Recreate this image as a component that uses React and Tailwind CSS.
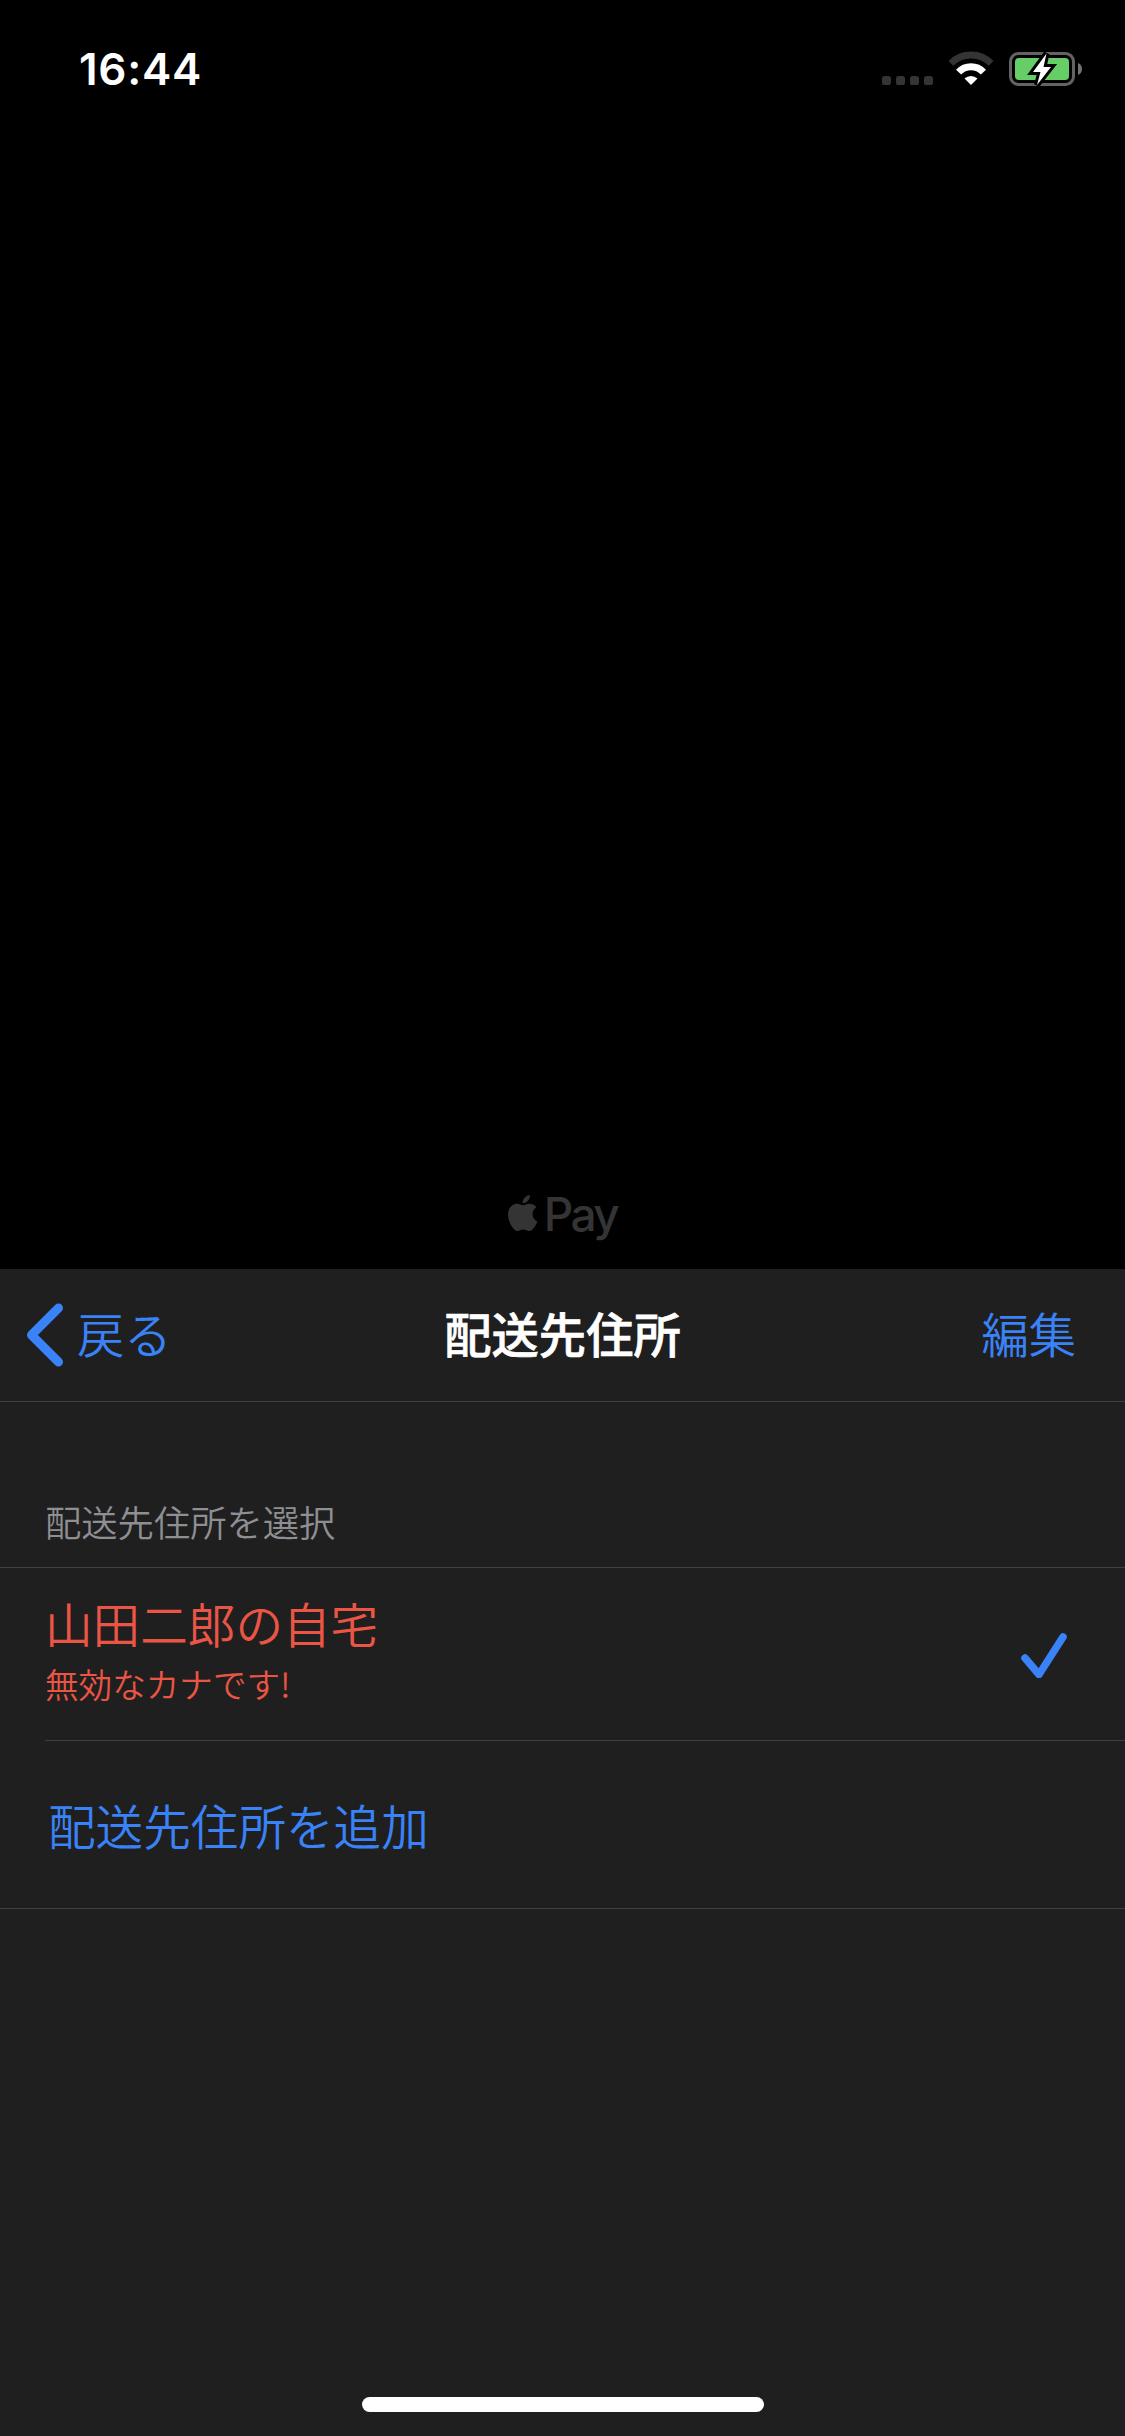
import React from "react";

const jp = "font-['Noto_Sans_CJK_JP',sans-serif]";

function StatusBar() {
  return (
    <div className="flex h-[132px] items-start justify-between pl-[79px] pr-[43px] pt-[42px]">
      <span className="font-['Inter',sans-serif] text-[44px] font-semibold leading-[54px] tracking-[0.7px] text-white">16:44</span>
      <svg width="204" height="46" viewBox="878 46 204 46" className="mt-1">
        {[882, 896, 910, 924].map((x) => (
          <rect key={x} x={x} y="76" width="9" height="9" rx="2.6" fill="#343434" />
        ))}
        <path d="M950.9 63.4 A28.3 28.3 0 0 1 991.1 63.4" fill="none" stroke="#343434" strokeWidth="6.8" />
        <path d="M958.6 72.2 A17 17 0 0 1 983.4 72.2" fill="none" stroke="#fff" strokeWidth="7" />
        <path d="M964.5 78.6 A9.2 9.2 0 0 1 977.5 78.6 L971 85 Z" fill="#fff" />
        <rect x="1010.5" y="53.5" width="63" height="31" rx="8" fill="none" stroke="#636363" strokeWidth="3" />
        <rect x="1015" y="58" width="54" height="22" rx="4" fill="#67cd67" />
        <path d="M1078 63 Q1082 64.5 1082 69 Q1082 73.5 1078 75 Z" fill="#737373" />
        <path d="M1046.5 53.5 L1033 72 H1040.5 L1037 85 L1051 67 H1043.5 Z" fill="#fff" stroke="#000" strokeWidth="6" paintOrder="stroke" />
      </svg>
    </div>
  );
}

function ApplePayMark() {
  return (
    <div className="flex h-[90px] items-start justify-center text-[#343434]">
      <svg width="30" height="36" viewBox="2.2 0 20 24" className="mt-4" fill="currentColor">
        <path d="M12.152 6.896c-.948 0-2.415-1.078-3.96-1.04-2.04.027-3.91 1.183-4.961 3.014-2.117 3.675-.546 9.103 1.519 12.09 1.013 1.454 2.208 3.09 3.792 3.039 1.52-.065 2.09-.987 3.935-.987 1.831 0 2.35.987 3.96.948 1.637-.026 2.676-1.48 3.676-2.948 1.156-1.688 1.636-3.325 1.662-3.415-.039-.013-3.182-1.221-3.22-4.857-.026-3.04 2.48-4.494 2.597-4.559-1.429-2.09-3.623-2.324-4.39-2.376-2-.156-3.675 1.09-4.61 1.09zM15.53 3.83c.843-1.012 1.4-2.427 1.245-3.83-1.207.052-2.662.805-3.532 1.818-.78.896-1.454 2.338-1.273 3.714 1.338.104 2.715-.688 3.559-1.701" />
      </svg>
      <span className="ml-[6px] mt-[10px] font-['Inter',sans-serif] text-[46px] font-medium leading-[50px] tracking-[-2.5px]">Pay</span>
    </div>
  );
}

export default function App() {
  return (
    <div className={`flex h-[2436px] w-[1125px] flex-col bg-black ${jp}`}>
      <StatusBar />
      <div className="flex-1" />
      <ApplePayMark />
      <div className="flex h-[1167px] flex-col bg-[#1f1f1f]">
        <div className="grid h-[133px] grid-cols-3 items-center border-b border-[#404040] pb-[4px] text-[47.3px] leading-[60px]">
          <div className="flex items-center text-[#3a82f7]">
            <svg width="38" height="64" viewBox="0 0 38 64" className="ml-[26px] mt-[4px]" fill="none" stroke="currentColor" strokeWidth="9" strokeLinecap="round" strokeLinejoin="round">
              <path d="M32.5 5 L5.500 32 L32.5 59" />
            </svg>
            <span className="ml-[13px] font-[350]">戻る</span>
          </div>
          <span className="text-center font-medium text-white [-webkit-text-stroke:0.7px_white]">配送先住所</span>
          <span className="pr-[49px] text-right font-[350] text-[#3a82f7]">編集</span>
        </div>
        <div className="flex h-[166px] items-end border-b border-[#404040] pb-[21px] pl-[45px] text-[36.3px] font-[350] leading-[50px] text-[#8e8e93]">配送先住所を選択</div>
        <div className="ml-[45px] flex h-[173px] items-center justify-between border-b border-[#404040] pr-[56px]">
          <div className="flex flex-col font-[350] text-[#eb5545]">
            <span className="-mt-[7px] text-[47.6px] leading-[66px]">山田二郎の自宅</span>
            <span className="text-[33.6px] leading-[55px]">無効なカナです!</span>
          </div>
          <svg width="50" height="48" viewBox="0 0 50 48" fill="none" stroke="#3a82f7" strokeWidth="7.5" strokeLinecap="round" strokeLinejoin="round">
            <path d="M6 28 L20 44.5 L44 7" />
          </svg>
        </div>
        <div className="flex h-[168px] items-center border-b border-[#404040] pl-[48px] text-[47.6px] font-[350] leading-[60px] text-[#3a82f7]">配送先住所を追加</div>
        <div className="flex-1" />
        <div className="mb-[24px] h-[15px] w-[402px] self-center rounded-full bg-white" />
      </div>
    </div>
  );
}
